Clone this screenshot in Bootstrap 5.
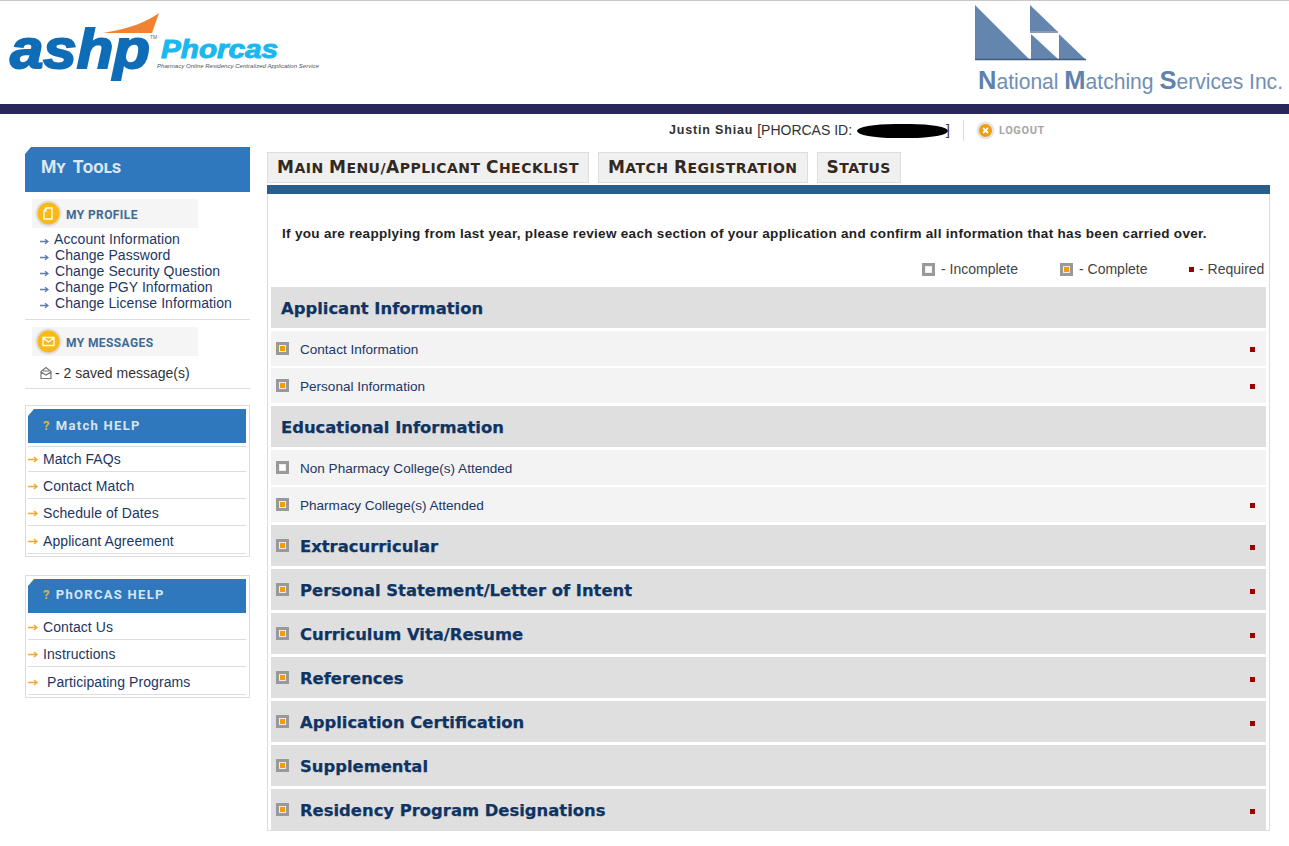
<!DOCTYPE html>
<html lang="en">
<head>
<meta charset="utf-8">
<title>PhORCAS Main Menu</title>
<link href="https://cdn.jsdelivr.net/npm/bootstrap@5.3.0/dist/css/bootstrap.min.css" rel="stylesheet">
<style>
html,body{overflow:hidden}
body{font-family:"Liberation Sans",Arial,sans-serif;font-size:14px;color:#1c3664;background:#fff}
a{color:inherit;text-decoration:none}
.top-head{height:104px;border-top:1px solid #c8c8c8}
.top-head svg{display:block}
.stripe{height:10px;background:#29265a}
.user-bar{height:33px;padding-left:669px;color:#333}
.user-name{font-weight:700;font-size:12.5px;letter-spacing:.82px;margin-right:4px}
.redact{display:inline-block;width:91px;height:14px;background:#000;border-radius:50%/60%;margin-left:5px}
.close-br{margin-left:-2px}
.sep{width:1px;height:21px;background:#ddd;margin:0 12px 0 13px}
.logout{font-family:Roboto,sans-serif;font-weight:700;font-size:11px;letter-spacing:.6px;color:#a6a6a6;margin-left:4px;padding-top:2px}
.page-cols{align-items:flex-start}
.side{width:225px;margin-left:25px;flex:none}
.tools-head{height:45px;background:#2f78bd;color:#dce7f1;font-family:Roboto,sans-serif;font-weight:700;font-variant:small-caps;font-size:17.5px;word-spacing:3px;padding-left:16px;clip-path:polygon(6px 0,100% 0,100% 100%,0 100%,0 7px);line-height:40px}
.sub-head{width:166px;height:29px;background:#f5f5f5;margin-left:7px;font-family:Roboto,sans-serif;font-weight:700;font-size:12px;letter-spacing:.4px;color:#3f6a94;gap:4px;padding-left:3px}
.sub-head span{padding-top:3px}
.first-sub{margin-top:7px}
.prof-list{margin:3px 0 0 15px;line-height:16px;letter-spacing:.07px}
.prof-list svg{margin-right:5px;vertical-align:-1px}
.shift1{margin-left:1px}
.rule-a{border-bottom:1px solid #ddd;margin-top:8px;margin-bottom:7px}
.msg-line{height:33px;padding:2px 0 0 15px;border-bottom:1px solid #ddd;color:#333;gap:3px}
.help-box{border:1px solid #ddd;padding:3px 3px 2px 2px;margin-top:16px}
.help-box+.help-box{margin-top:18px}
.help-head{height:34px;background:#2f78bd;color:#d8e4ef;font-family:Roboto,sans-serif;font-weight:700;font-size:13px;letter-spacing:1.3px;padding-left:15px;gap:5px;clip-path:polygon(6px 0,100% 0,100% 100%,0 100%,0 7px)}
.help-box+.help-box .help-head{padding-bottom:2px}
.help-head i{font-style:normal;color:#d6b83b}
.help-items{margin-top:3px;border-top:1px solid #ddd;letter-spacing:.08px}
.help-items.nolead{margin-top:0;border-top:0}
.help-items li{height:27px;border-bottom:1px solid #ddd;gap:5px;padding-top:2px}
.help-items li.tall{height:28px;padding-top:3px}
.help-items li.short{height:25px;padding-top:0}
.main-col{width:1003px;margin-left:17px;flex:none}
.tabs-row{gap:9px;margin-top:5px;padding:0}
.tab-item{height:31px;background:#f0f0f0;border:1px solid #ddd;padding:0 9px;font-family:"DejaVu Sans",sans-serif;font-weight:700;text-transform:uppercase;font-size:14px;letter-spacing:.48px;color:#33291f;line-height:28px;white-space:nowrap}
.tab-item b{font-size:17px}
.blue-bar{height:9px;background:#2a5d8f;margin-top:2px}
.panel-box{border:solid #ddd;border-width:0 1px 1px 1px;padding:0 3px}
.intro{font-weight:700;font-size:13.5px;letter-spacing:.31px;color:#222;padding:32px 0 0 11px;line-height:16px;height:46px;white-space:nowrap}
.legend-row{height:47px;padding-top:21px;line-height:16px;color:#444}
.legend-row>span{display:flex;align-items:center;gap:6px;width:0;height:16px;white-space:nowrap}
.lg1{margin-left:651px}.lg2{margin-left:138px}.lg3{margin-left:129px;gap:5px!important}
.box-ico{width:13px;height:13px;border:3px solid #999;background:#fff;display:flex;align-items:center;justify-content:center;flex:none;box-shadow:inset 0 0 0 1px #eee}
.box-ico::after{content:"";width:5px;height:5px;background:#f29d00}
.box-ico.empty::after{display:none}
.req{width:5px;height:5px;background:#900;flex:none;margin-left:auto}
.legend-row .req{margin-left:0}
.chk-sec{height:41px;background:#dfdfdf;margin-bottom:3px;font-family:"DejaVu Sans",sans-serif;font-weight:700;font-size:16.4px;color:#0f3463;padding:0 11px 0 5px;-webkit-text-stroke:.25px #0f3463}
.chk-sec.plain{padding-left:10px}
.chk-sec .label-t{margin-left:11px;margin-top:3px}
.chk-sec.plain .label-t{margin-left:0}
.chk-sec .req{margin-top:3px}
.chk-sec:last-child{margin-bottom:0}
.chk-row{height:35px;background:#f3f3f3;margin-bottom:2px;padding:0 11px 0 5px;color:#1c3664;font-size:13.55px}
.chk-row.endgroup{margin-bottom:3px}
.chk-row .label-t{margin-left:11px;margin-top:4px}
.chk-row .req{margin-top:2px}
</style>
</head>
<body>
<svg width="0" height="0" class="d-block position-absolute">
<symbol id="ar-blue" viewBox="0 0 9 7"><path d="M0 3.5H7M5 1.2 8 3.5 5 5.8" fill="none" stroke="#5f80a8" stroke-width="1.3"/></symbol>
<symbol id="ar-org" viewBox="0 0 10 7"><path d="M0 3.5H8.500M6 1 9 3.500 6 6" fill="none" stroke="#f2a733" stroke-width="1.400"/></symbol>
</svg>

<header class="top-head d-flex justify-content-between">
  <svg width="330" height="103" viewBox="0 0 330 103">
    <path d="M103 32C128 28 147 21 159 12L152 32Z" fill="#f08232"/>
    <text x="10" y="67" font-family="Liberation Sans" font-weight="700" font-style="italic" font-size="56" fill="#0f6cb6" stroke="#0f6cb6" stroke-width="2" textLength="140" lengthAdjust="spacingAndGlyphs">ashp</text>
    <text x="150" y="38" font-family="Liberation Sans" font-size="5" fill="#666">TM</text>
    <text x="161" y="57" font-family="Liberation Sans" font-weight="700" font-style="italic" font-size="25" fill="#1bb8ee" stroke="#1bb8ee" stroke-width="1" textLength="117" lengthAdjust="spacingAndGlyphs">Phorcas</text>
    <text x="157" y="67" font-family="Liberation Sans" font-style="italic" font-size="5.500" fill="#555" textLength="162" lengthAdjust="spacingAndGlyphs">Pharmacy Online Residency Centralized Application Service</text>
  </svg>
  <svg width="315" height="103" viewBox="974 0 315 103">
    <path d="M975 4V58H1029Z" fill="#6485ad"/>
    <path d="M1030 4V30H1057Z" fill="#6485ad"/>
    <path d="M1031 33V58H1058Z" fill="#6485ad"/>
    <path d="M1059 33V58H1085Z" fill="#6485ad"/>
    <path d="M1030 31H1058" stroke="#3e5a80" stroke-width="1.200"/>
    <path d="M1058.500 32V58" stroke="#fff" stroke-width="1"/>
    <path d="M975 58.500H1086" stroke="#3e5a80" stroke-width="1.500"/>
    <text x="978" y="88" font-family="Liberation Sans" font-size="21.500" fill="#6f8fb6" textLength="305" lengthAdjust="spacingAndGlyphs"><tspan font-size="26" font-weight="700" fill="#5f82ad">N</tspan>ational <tspan font-size="26" font-weight="700" fill="#5f82ad">M</tspan>atching <tspan font-size="26" font-weight="700" fill="#5f82ad">S</tspan>ervices Inc.</text>
  </svg>
</header>
<div class="stripe"></div>

<div class="user-bar d-flex align-items-center">
  <span class="user-name">Justin Shiau</span><span>[PHORCAS ID:</span><span class="redact"></span><span class="close-br">]</span>
  <span class="sep"></span>
  <svg width="19" height="19" viewBox="0 0 19 19"><circle cx="9.500" cy="9.500" r="9" fill="#e4e4e4"/><circle cx="9.500" cy="9.500" r="6.500" fill="#f29d0c"/><path d="M7 7l5 5M12 7l-5 5" stroke="#fff" stroke-width="1.800"/></svg>
  <span class="logout">LOGOUT</span>
</div>

<div class="d-flex page-cols">
  <aside class="side">
    <div class="tools-head">My Tools</div>
    <div class="sub-head first-sub d-flex align-items-center">
      <svg width="27" height="27" viewBox="0 0 27 27"><circle cx="13.500" cy="13.500" r="13" fill="#dedede"/><circle cx="13.500" cy="13.500" r="11" fill="#fdb913"/><path d="M11 8h6v11h-8v-8zM11 8v3H9" fill="none" stroke="#fff" stroke-width="1.300"/></svg>
      <span>MY PROFILE</span>
    </div>
    <ul class="list-unstyled prof-list mb-0">
      <li><svg width="9" height="7"><use href="#ar-blue"/></svg><a href="#">Account Information</a></li>
      <li><svg width="9" height="7"><use href="#ar-blue"/></svg><a href="#" class="shift1">Change Password</a></li>
      <li><svg width="9" height="7"><use href="#ar-blue"/></svg><a href="#" class="shift1">Change Security Question</a></li>
      <li><svg width="9" height="7"><use href="#ar-blue"/></svg><a href="#" class="shift1">Change PGY Information</a></li>
      <li><svg width="9" height="7"><use href="#ar-blue"/></svg><a href="#" class="shift1">Change License Information</a></li>
    </ul>
    <div class="rule-a"></div>
    <div class="sub-head d-flex align-items-center">
      <svg width="27" height="27" viewBox="0 0 27 27"><circle cx="13.500" cy="13.500" r="13" fill="#dedede"/><circle cx="13.500" cy="13.500" r="11" fill="#fdb913"/><path d="M8 9.500h11v8H8zM8 10l5.500 4 5.500-4" fill="none" stroke="#fff" stroke-width="1.300"/></svg>
      <span>MY MESSAGES</span>
    </div>
    <div class="msg-line d-flex align-items-center">
      <svg width="12" height="14" viewBox="0 0 12 14"><path d="M1 5.500 6 1.500l5 4v7H1zM1 6l5 3 5-3M3 5h6" fill="none" stroke="#777" stroke-width="1.200"/></svg>
      <span>- 2 saved message(s)</span>
    </div>

    <section class="help-box">
      <div class="help-head d-flex align-items-center"><i>?</i><span>Match HELP</span></div>
      <ul class="list-unstyled mb-0 help-items">
        <li class="d-flex align-items-center short"><svg width="10" height="7"><use href="#ar-org"/></svg><a href="#">Match FAQs</a></li>
        <li class="d-flex align-items-center"><svg width="10" height="7"><use href="#ar-org"/></svg><a href="#">Contact Match</a></li>
        <li class="d-flex align-items-center"><svg width="10" height="7"><use href="#ar-org"/></svg><a href="#">Schedule of Dates</a></li>
        <li class="d-flex align-items-center tall"><svg width="10" height="7"><use href="#ar-org"/></svg><a href="#">Applicant Agreement</a></li>
      </ul>
    </section>
    <section class="help-box">
      <div class="help-head d-flex align-items-center"><i>?</i><span>PhORCAS HELP</span></div>
      <ul class="list-unstyled mb-0 help-items nolead">
        <li class="d-flex align-items-center"><svg width="10" height="7"><use href="#ar-org"/></svg><a href="#">Contact Us</a></li>
        <li class="d-flex align-items-center"><svg width="10" height="7"><use href="#ar-org"/></svg><a href="#">Instructions</a></li>
        <li class="d-flex align-items-center tall"><svg width="10" height="7"><use href="#ar-org"/></svg><a href="#">&nbsp;Participating Programs</a></li>
      </ul>
    </section>
  </aside>

  <main class="main-col">
    <nav class="d-flex tabs-row">
      <a class="tab-item" href="#"><b>M</b>ain <b>M</b>enu/<b>A</b>pplicant <b>C</b>hecklist</a>
      <a class="tab-item" href="#"><b>M</b>atch <b>R</b>egistration</a>
      <a class="tab-item" href="#"><b>S</b>tatus</a>
    </nav>
    <div class="blue-bar"></div>
    <div class="panel-box">
      <p class="intro mb-0">If you are reapplying from last year, please review each section of your application and confirm all information that has been carried over.</p>
      <div class="legend-row d-flex">
        <span class="lg1"><b class="box-ico empty"></b>- Incomplete</span>
        <span class="lg2"><b class="box-ico"></b>- Complete</span>
        <span class="lg3"><b class="req"></b>- Required</span>
      </div>
      <div class="chk-sec plain d-flex align-items-center"><span class="label-t">Applicant Information</span></div>
      <div class="chk-row d-flex align-items-center"><b class="box-ico"></b><span class="label-t">Contact Information</span><b class="req"></b></div>
      <div class="chk-row endgroup d-flex align-items-center"><b class="box-ico"></b><span class="label-t">Personal Information</span><b class="req"></b></div>
      <div class="chk-sec plain d-flex align-items-center"><span class="label-t">Educational Information</span></div>
      <div class="chk-row d-flex align-items-center"><b class="box-ico empty"></b><span class="label-t">Non Pharmacy College(s) Attended</span></div>
      <div class="chk-row endgroup d-flex align-items-center"><b class="box-ico"></b><span class="label-t">Pharmacy College(s) Attended</span><b class="req"></b></div>
      <div class="chk-sec d-flex align-items-center"><b class="box-ico"></b><span class="label-t">Extracurricular</span><b class="req"></b></div>
      <div class="chk-sec d-flex align-items-center"><b class="box-ico"></b><span class="label-t">Personal Statement/Letter of Intent</span><b class="req"></b></div>
      <div class="chk-sec d-flex align-items-center"><b class="box-ico"></b><span class="label-t">Curriculum Vita/Resume</span><b class="req"></b></div>
      <div class="chk-sec d-flex align-items-center"><b class="box-ico"></b><span class="label-t">References</span><b class="req"></b></div>
      <div class="chk-sec d-flex align-items-center"><b class="box-ico"></b><span class="label-t">Application Certification</span><b class="req"></b></div>
      <div class="chk-sec d-flex align-items-center"><b class="box-ico"></b><span class="label-t">Supplemental</span></div>
      <div class="chk-sec d-flex align-items-center"><b class="box-ico"></b><span class="label-t">Residency Program Designations</span><b class="req"></b></div>
    </div>
  </main>
</div>
<script src="https://cdn.jsdelivr.net/npm/bootstrap@5.3.0/dist/js/bootstrap.bundle.min.js"></script>
</body>
</html>
